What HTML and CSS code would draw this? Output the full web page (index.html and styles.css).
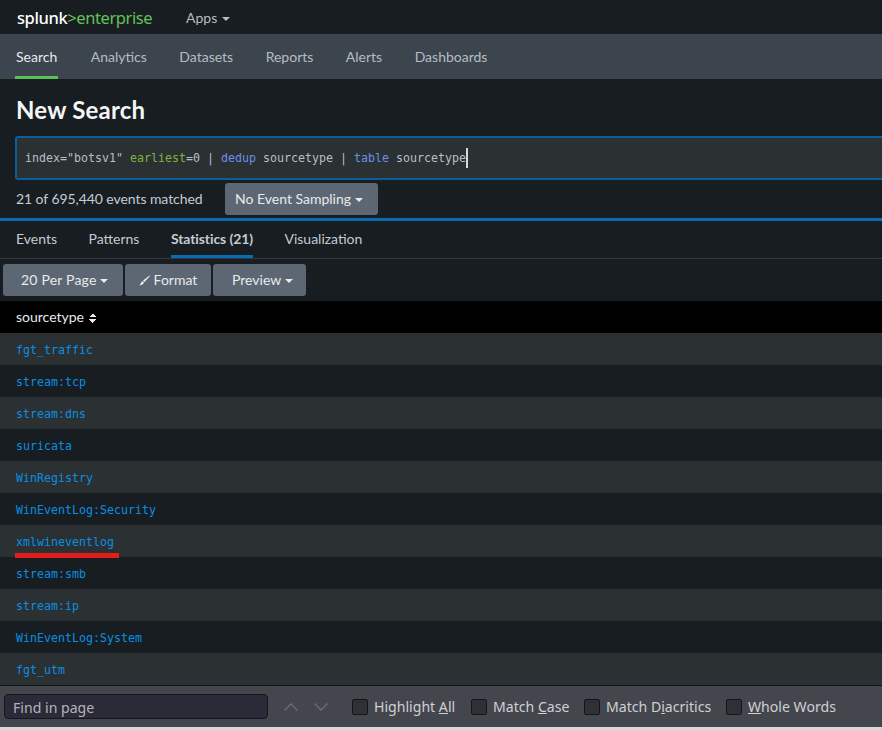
FILE: index.html
```html
<!DOCTYPE html>
<html lang="en">
<head>
  <meta charset="UTF-8">
  <title>Search | Splunk</title>
  <link rel="stylesheet" href="styles.css">
</head>
<body>
  <header class="topbar">
    <div class="logo">splunk<span class="logo-green">&gt;enterprise</span></div>
    <div class="apps">Apps <span class="caret"></span></div>
  </header>

  <nav class="appnav">
    <a class="active">Search</a>
    <a>Analytics</a>
    <a>Datasets</a>
    <a>Reports</a>
    <a>Alerts</a>
    <a>Dashboards</a>
  </nav>

  <h1 class="title">New Search</h1>

  <div class="searchbox">
    <span>index="botsv1" <span class="arg">earliest</span>=0 | <span class="cmd">dedup</span> sourcetype | <span class="cmd">table</span> sourcetype</span><span class="cursor"></span>
  </div>

  <div class="status">
    <span class="matched">21 of 695,440 events matched</span>
    <button class="btn sampling">No Event Sampling <span class="caret"></span></button>
  </div>

  <div class="tabs">
    <a>Events</a>
    <a>Patterns</a>
    <a class="active">Statistics (21)</a>
    <a>Visualization</a>
  </div>

  <div class="toolbar">
    <button class="btn perpage">20 Per Page <span class="caret"></span></button>
    <button class="btn format">
      <svg class="brush" width="11" height="11" viewBox="0 0 11 11"><path d="M10.500 .5 11 1 5.500 7 4 5.500Z M3.400 6 5 7.600C4.600 9.400 2.400 10.400 .4 10.200 1.600 9.400 2 7 3.400 6Z" fill="#e8eaec"/></svg>
      Format
    </button>
    <button class="btn preview">Preview <span class="caret"></span></button>
  </div>

  <div class="thead">sourcetype <span class="sort"></span></div>
  <div class="rows">
    <div class="row">fgt_traffic</div>
    <div class="row">stream:tcp</div>
    <div class="row">stream:dns</div>
    <div class="row">suricata</div>
    <div class="row">WinRegistry</div>
    <div class="row">WinEventLog:Security</div>
    <div class="row">xmlwineventlog<span class="redline"></span></div>
    <div class="row">stream:smb</div>
    <div class="row">stream:ip</div>
    <div class="row">WinEventLog:System</div>
    <div class="row">fgt_utm</div>
  </div>

  <div class="findbar">
    <div class="findinput">Find in page</div>
    <div class="arrows">
      <svg width="16" height="10" viewBox="0 0 16 10"><path d="M1.500 8.500 8 2l6.500 6.500" fill="none" stroke="#6c6e74" stroke-width="1.300"/></svg>
      <svg width="16" height="10" viewBox="0 0 16 10"><path d="M1.500 1.500 8 8l6.500-6.500" fill="none" stroke="#6c6e74" stroke-width="1.300"/></svg>
    </div>
    <label class="check c-all"><span class="box"></span><span>Highlight <u>A</u>ll</span></label>
    <label class="check c-case"><span class="box"></span><span>Match <u>C</u>ase</span></label>
    <label class="check c-dia"><span class="box"></span><span>Match D<u>i</u>acritics</span></label>
    <label class="check"><span class="box"></span><span><u>W</u>hole Words</span></label>
  </div>
  <div class="bottomstrip"></div>
</body>
</html>
```

FILE: styles.css
```css
* {
  box-sizing: border-box;
}
html, body {
  margin: 0;
  padding: 0;
  height: 100%;
  overflow: hidden;
}
body {
  display: flex;
  flex-direction: column;
  background-color: #171d21;
  color: #c3cbd4;
  font-family: Lato, "Open Sans", sans-serif;
  font-size: 14px;
}

.topbar {
  height: 34px;
  flex: none;
  display: flex;
  align-items: center;
  padding-left: 17px;
}
.logo {
  width: 169px;
  font-family: "Noto Sans", sans-serif;
  font-size: 16.500px;
  font-weight: 500;
  letter-spacing: -0.4px;
  color: #fff;
}
.logo-green {
  font-weight: 400;
  color: #65c05a;
}
.apps {
  color: #b5bcc4;
}
.caret {
  display: inline-block;
  width: 0;
  height: 0;
  margin-left: 1px;
  vertical-align: 2px;
  border-left: 4px solid transparent;
  border-right: 4px solid transparent;
  border-top: 4px solid currentColor;
}

.appnav {
  height: 45px;
  flex: none;
  display: flex;
  gap: 32.500px;
  padding-left: 16px;
  background-color: #3c444d;
}
.appnav a {
  height: 45px;
  line-height: 46px;
  color: #b5bcc4;
}
.appnav a.active {
  margin-left: -1px;
  padding: 0 1px;
  color: #e8eaec;
  border-bottom: 3px solid #5cc05c;
}

.title {
  height: 57px;
  flex: none;
  margin: 0;
  padding-left: 16px;
  line-height: 62px;
  font-size: 24px;
  font-weight: 700;
  letter-spacing: 0.2px;
  color: #f4f5f6;
}

.searchbox {
  height: 44px;
  flex: none;
  margin-left: 15px;
  display: flex;
  align-items: center;
  padding-left: 8px;
  background-color: #2b3033;
  border: 2px solid #0a5f9a;
  border-right: 0;
  border-radius: 3px 0 0 3px;
  font-family: "DejaVu Sans Mono", monospace;
  font-size: 11.630px;
  white-space: pre;
  color: #b9bfc5;
}
.arg {
  color: #7fb43c;
}
.cmd {
  color: #6b8fe8;
}
.cursor {
  width: 2px;
  height: 20px;
  background-color: #d8d8d8;
}

.status {
  height: 41px;
  flex: none;
  display: flex;
  align-items: flex-start;
  padding: 3px 0 0 16px;
  border-bottom: 3px solid #0a6cad;
}
.matched {
  width: 209px;
  line-height: 32px;
  letter-spacing: -0.07px;
  color: #c3cbd4;
}

.btn {
  height: 32px;
  padding: 0 0 2px;
  border: 0;
  border-radius: 3px;
  background-color: #5c6773;
  color: #e8eaec;
  font-family: inherit;
  font-size: 14px;
  text-align: left;
}
.btn .caret {
  margin-left: 0;
}
.sampling {
  width: 153px;
  padding-left: 10px;
}

.tabs {
  height: 38px;
  flex: none;
  display: flex;
  gap: 31.500px;
  padding-left: 16px;
  border-bottom: 1px solid #31373e;
}
.tabs a {
  height: 37px;
  line-height: 36px;
  color: #c3cbd4;
}
.tabs a.active {
  font-weight: 700;
  letter-spacing: -0.1px;
  border-bottom: 3px solid #0a6cad;
}

.toolbar {
  height: 42px;
  flex: none;
  display: flex;
  gap: 2px;
  padding: 5px 0 0 3px;
}
.perpage {
  width: 120px;
  padding-left: 18px;
  letter-spacing: 0.2px;
}
.format {
  width: 86px;
  padding-left: 14px;
}
.preview {
  width: 93px;
  padding-left: 19px;
}
.brush {
  vertical-align: -1px;
}

.thead {
  height: 32px;
  flex: none;
  padding-left: 16px;
  line-height: 32px;
  background-color: #000;
  color: #e8eaec;
}
.sort {
  display: inline-block;
  width: 8px;
  height: 10px;
  margin-left: 1px;
  vertical-align: -0.500px;
  background:
    linear-gradient(to top left, #e8eaec 50%, transparent 50%) 0 0 / 4px 4px no-repeat,
    linear-gradient(to top right, #e8eaec 50%, transparent 50%) 4px 0 / 4px 4px no-repeat,
    linear-gradient(to bottom left, #e8eaec 50%, transparent 50%) 0 6px / 4px 4px no-repeat,
    linear-gradient(to bottom right, #e8eaec 50%, transparent 50%) 4px 6px / 4px 4px no-repeat;
}

.rows {
  flex: none;
}
.row {
  position: relative;
  height: 32px;
  padding-left: 16px;
  line-height: 35px;
  font-family: "DejaVu Sans Mono", monospace;
  font-size: 11.630px;
  color: #0a8fe0;
}
.row:nth-child(odd) {
  background-color: #2b3033;
}
.redline {
  position: absolute;
  left: 15px;
  top: 28px;
  width: 104px;
  height: 5px;
  background-color: #e31c1c;
}

.findbar {
  height: 42px;
  flex: none;
  display: flex;
  align-items: center;
  padding-left: 4px;
  background-color: #44464e;
  border-top: 1px solid #111417;
  color: #d0d0d2;
  font-family: "Noto Sans", sans-serif;
  font-size: 14.100px;
}
.findinput {
  width: 264px;
  height: 25px;
  padding-left: 8px;
  line-height: 25px;
  background-color: #2a2a38;
  border: 1px solid #16161c;
  border-radius: 4px;
  color: #b4b4b8;
}
.arrows {
  width: 84px;
  display: flex;
  gap: 14px;
  padding-left: 15px;
}
.check {
  display: flex;
  align-items: center;
}
.c-all {
  width: 119px;
}
.c-case {
  width: 113px;
}
.c-dia {
  width: 142px;
}
.box {
  width: 16px;
  height: 16px;
  margin-right: 6px;
  background-color: #2e3036;
  border: 1px solid #15161a;
  border-radius: 2px;
}
.bottomstrip {
  height: 3px;
  flex: none;
  background-color: #d9d9d9;
}
```
